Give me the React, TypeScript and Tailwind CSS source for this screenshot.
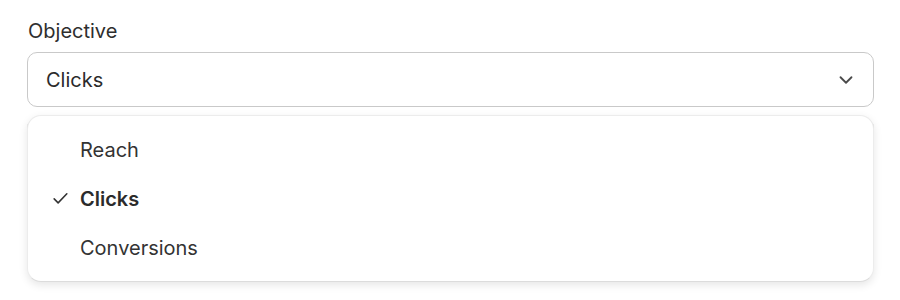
import React from "react";

export default function App() {
  return (
    <div className="w-[900px] h-[300px] bg-white relative overflow-hidden" style={{ fontFamily: "Inter, 'Noto Sans', sans-serif" }}>
      <div className="pt-[18px] pl-[27px] pr-[26px]">
        <div className="text-[20px] leading-[26px] text-[#2e2e2e] pl-[1px]">Objective</div>
        <div className="mt-[8px] h-[55px] rounded-[10px] border border-[#c9c9c9] flex items-center justify-between pl-[18px] pr-[16px]">
          <span className="text-[20px] text-[#2b2b2b]">Clicks</span>
          <svg width="22" height="22" viewBox="0 0 24 24" fill="none" stroke="#4a4a4a" strokeWidth="2" strokeLinecap="round" strokeLinejoin="round">
            <path d="M6 9l6 6 6-6" />
          </svg>
        </div>
      </div>
      <div className="absolute left-[27px] right-[26px] top-[118px] h-[150px] rounded-[10px] border border-[#c4c4c4] bg-white" />
      <div className="absolute left-[27px] right-[26px] top-[115px] h-[167px] rounded-[14px] border border-[#ececec] border-b-[#dcdcdc] bg-white shadow-[0_3px_8px_rgba(0,0,0,0.10)] pt-[9px]">
        <div className="h-[49px] flex items-center pl-[52px] text-[20px] text-[#333]">Reach</div>
        <div className="h-[49px] flex items-center text-[20px] text-[#2b2b2b] font-semibold">
          <span className="w-[52px] flex justify-end pr-[10px]">
            <svg width="19" height="19" viewBox="0 0 24 24" fill="none" stroke="#333" strokeWidth="2" strokeLinecap="round" strokeLinejoin="round">
              <path d="M4 12.5l5 5L20 6" />
            </svg>
          </span>
          Clicks
        </div>
        <div className="h-[49px] flex items-center pl-[52px] text-[20px] text-[#333]">Conversions</div>
      </div>
    </div>
  );
}
